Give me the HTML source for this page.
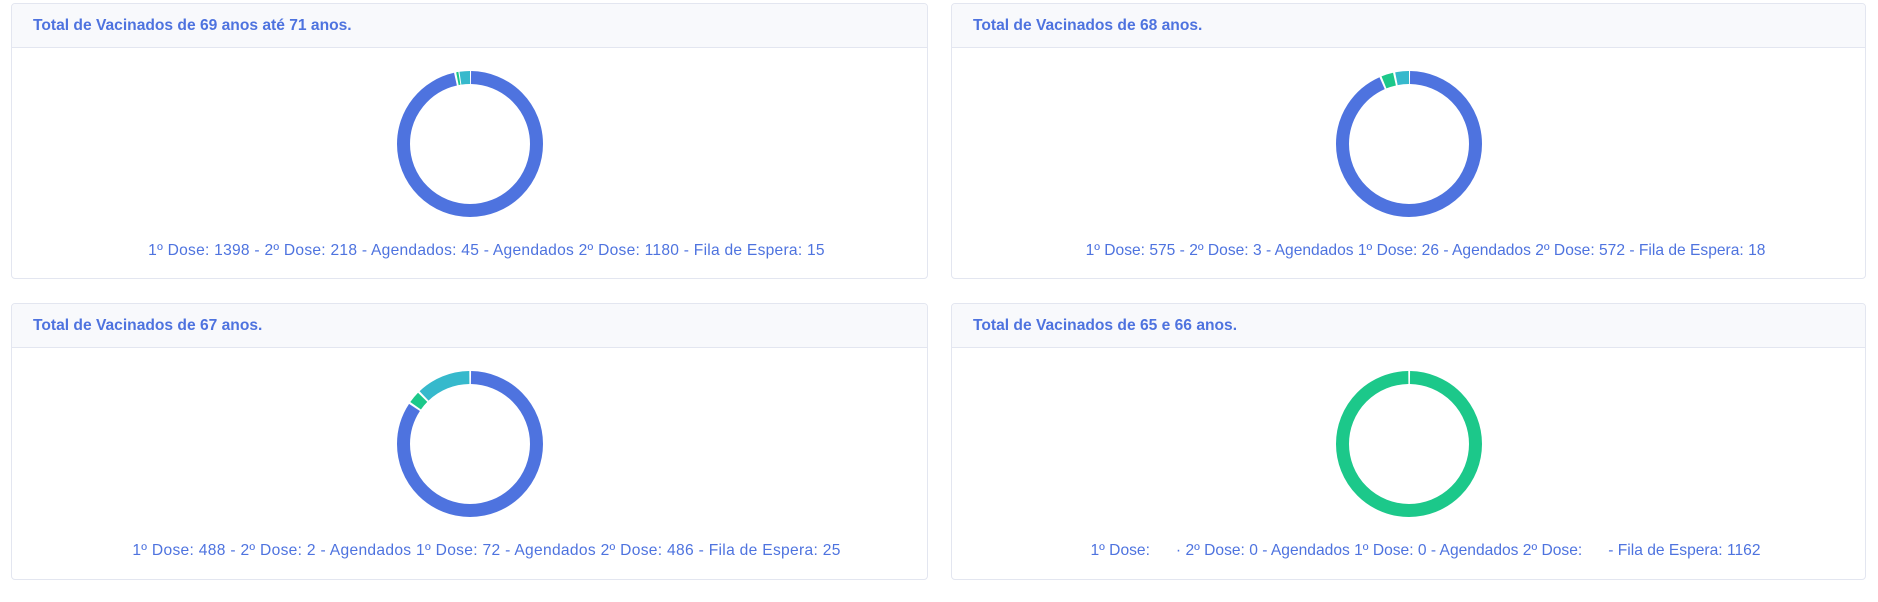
<!DOCTYPE html>
<html><head><meta charset="utf-8"><style>
html,body{margin:0;padding:0;background:#fff;width:1878px;height:602px;overflow:hidden;font-family:"Liberation Sans",sans-serif;}
.card{position:absolute;border:1px solid #e3e6f0;border-radius:4px;background:#fff;box-sizing:border-box;overflow:hidden}
.hd{height:44px;background:#f8f9fc;border-bottom:1px solid #e3e6f0;color:#4e73df;font-weight:bold;font-size:15.6px;line-height:44px;padding-left:21px;box-sizing:border-box}
.d{position:absolute;left:50%;top:66px;margin-left:-74px}
.t{position:absolute;left:34px;right:0;top:237px;text-align:center;color:#4e73df;font-size:15.6px;line-height:20px;white-space:pre}
</style></head><body>
<div class="card" style="left:11px;top:3px;width:917px;height:276px">
<div class="hd">Total de Vacinados de 69 anos até 71 anos.</div>
<svg class="d" width="148" height="148" viewBox="0 0 148 148"><g transform="rotate(-90 74 74)" fill="none" stroke-width="13">
<circle cx="74" cy="74" r="66.5" stroke="#4e73df" stroke-dasharray="402 20" stroke-dashoffset="-1"/>
<circle cx="74" cy="74" r="66.5" stroke="#1cc88a" stroke-dasharray="2 416" stroke-dashoffset="-405"/>
<circle cx="74" cy="74" r="66.5" stroke="#36b9cc" stroke-dasharray="11 420" stroke-dashoffset="-408"/>
</g></svg>
<div class="t" style="letter-spacing:0.25px">1º Dose: 1398 - 2º Dose: 218 - Agendados: 45 - Agendados 2º Dose: 1180 - Fila de Espera: 15</div>
</div>
<div class="card" style="left:951px;top:3px;width:915px;height:276px">
<div class="hd">Total de Vacinados de 68 anos.</div>
<svg class="d" width="148" height="148" viewBox="0 0 148 148"><g transform="rotate(-90 74 74)" fill="none" stroke-width="13">
<circle cx="74" cy="74" r="66.5" stroke="#4e73df" stroke-dasharray="389 40" stroke-dashoffset="-1"/>
<circle cx="74" cy="74" r="66.5" stroke="#1cc88a" stroke-dasharray="11 420" stroke-dashoffset="-392"/>
<circle cx="74" cy="74" r="66.5" stroke="#36b9cc" stroke-dasharray="14 420" stroke-dashoffset="-405"/>
</g></svg>
<div class="t">1º Dose: 575 - 2º Dose: 3 - Agendados 1º Dose: 26 - Agendados 2º Dose: 572 - Fila de Espera: 18</div>
</div>
<div class="card" style="left:11px;top:303px;width:917px;height:277px">
<div class="hd">Total de Vacinados de 67 anos.</div>
<svg class="d" width="148" height="148" viewBox="0 0 148 148"><g transform="rotate(-90 74 74)" fill="none" stroke-width="13">
<circle cx="74" cy="74" r="66.5" stroke="#4e73df" stroke-dasharray="351 80" stroke-dashoffset="-1"/>
<circle cx="74" cy="74" r="66.5" stroke="#1cc88a" stroke-dasharray="11 420" stroke-dashoffset="-354"/>
<circle cx="74" cy="74" r="66.5" stroke="#36b9cc" stroke-dasharray="50 420" stroke-dashoffset="-367"/>
</g></svg>
<div class="t" style="letter-spacing:0.3px">1º Dose: 488 - 2º Dose: 2 - Agendados 1º Dose: 72 - Agendados 2º Dose: 486 - Fila de Espera: 25</div>
</div>
<div class="card" style="left:951px;top:303px;width:915px;height:277px">
<div class="hd">Total de Vacinados de 65 e 66 anos.</div>
<svg class="d" width="148" height="148" viewBox="0 0 148 148"><g transform="rotate(-90 74 74)" fill="none" stroke-width="13">
<circle cx="74" cy="74" r="66.5" stroke="#1cc88a" stroke-dasharray="416 20" stroke-dashoffset="-1"/>
</g></svg>
<div class="t">1º Dose:      · 2º Dose: 0 - Agendados 1º Dose: 0 - Agendados 2º Dose:      - Fila de Espera: 1162</div>
</div>
</body></html>
